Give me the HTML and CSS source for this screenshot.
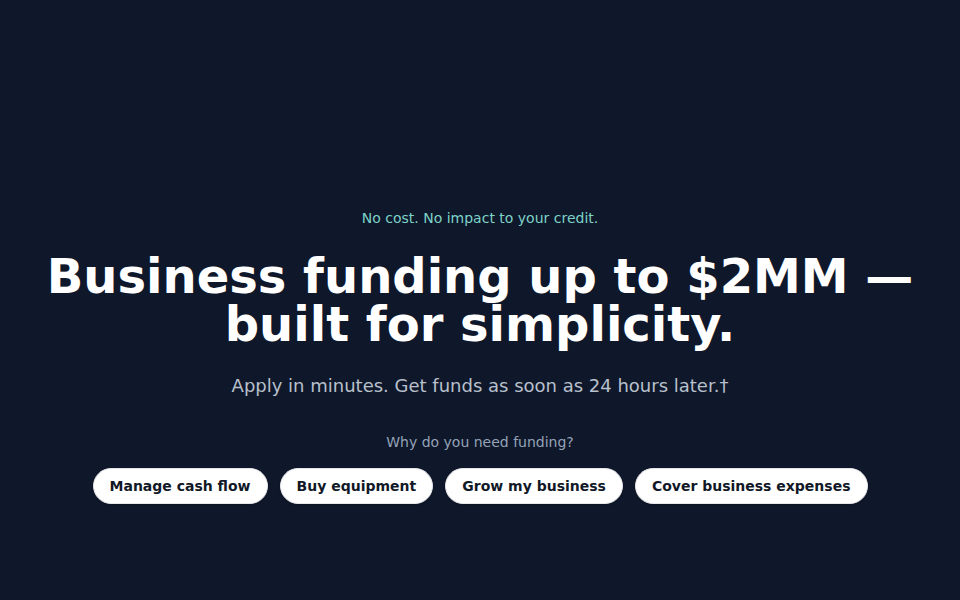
FILE: index.html
```html
<!DOCTYPE html>
<html lang="en">
<head>
<meta charset="utf-8">
<link rel="stylesheet" href="styles.css">
</head>
<body>
<main class="hero">
  <p class="eyebrow">No cost. No impact to your credit.</p>
  <h1 class="title">Business funding up to $2MM —<br>built for simplicity.</h1>
  <p class="subtitle">Apply in minutes. Get funds as soon as 24 hours later.†</p>
  <p class="question">Why do you need funding?</p>
  <div class="choices">
    <button class="choice">Manage cash flow</button>
    <button class="choice">Buy equipment</button>
    <button class="choice">Grow my business</button>
    <button class="choice">Cover business expenses</button>
  </div>
</main>
</body>
</html>
```
FILE: styles.css
```css
html, body {
  margin: 0;
  padding: 0;
  height: 100%;
}
body {
  background: #0f172a;
  font-family: "DejaVu Sans", sans-serif;
  color: #ffffff;
}
.hero {
  display: flex;
  flex-direction: column;
  align-items: center;
  text-align: center;
  padding-top: 208px;
  box-sizing: border-box;
  min-height: 100vh;
}
.eyebrow {
  margin: 0 0 24px;
  font-size: 14px;
  line-height: 20px;
  color: #7dd3c8;
}
.title {
  margin: 0 0 24px;
  font-size: 48px;
  line-height: 48px;
  font-weight: 700;
  color: #ffffff;
}
.subtitle {
  margin: 0 0 32px;
  font-size: 18px;
  line-height: 28px;
  color: #b8c0cc;
}
.question {
  margin: 0 0 16px;
  font-size: 14px;
  line-height: 20px;
  color: #94a3b8;
}
.choices {
  display: flex;
  gap: 12px;
  justify-content: center;
}
.choice {
  font-family: "DejaVu Sans", sans-serif;
  font-size: 14px;
  font-weight: 700;
  line-height: 20px;
  color: #111827;
  background: #ffffff;
  border: 1px solid #e5e7eb;
  border-radius: 9999px;
  padding: 7px 16px;
  box-shadow: 0 1px 2px rgba(0,0,0,0.2);
}
```
